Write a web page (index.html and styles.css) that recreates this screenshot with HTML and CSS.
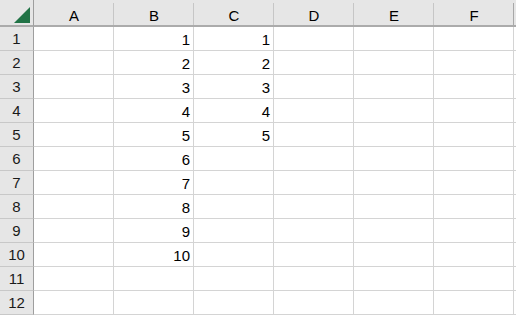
FILE: index.html
```html
<!DOCTYPE html>
<html lang="en">
<head>
    <meta charset="UTF-8">
    <meta name="viewport" content="width=device-width, initial-scale=1.0">
    <title>Sheet1</title>
    <link rel="stylesheet" href="styles.css">
</head>
<body>
    <div id="sheet">
        <div class="corner"><span class="tri"></span></div>
        <div class="colhead">A</div>
        <div class="colhead">B</div>
        <div class="colhead">C</div>
        <div class="colhead">D</div>
        <div class="colhead">E</div>
        <div class="colhead">F</div>
        <div class="colhead last"></div>
    </div>

    <script>
        // данные листа: столбец B 1..10, столбец C 1..5
        const sheet = document.getElementById('sheet');
        const rows = 12;
        const cols = ['A', 'B', 'C', 'D', 'E', 'F'];

        for (let r = 1; r <= rows; r++) {
            const head = document.createElement('div');
            head.className = 'rowhead';
            head.innerText = r;
            sheet.appendChild(head);

            cols.forEach(col => {
                const cell = document.createElement('div');
                cell.className = 'cell';
                if (col === 'B' && r <= 10) cell.innerText = r;
                if (col === 'C' && r <= 5) cell.innerText = r;
                sheet.appendChild(cell);
            });

            const rest = document.createElement('div');
            rest.className = 'cell';
            sheet.appendChild(rest);
        }
    </script>
</body>
</html>
```

FILE: styles.css
```css
body {
    margin: 0;
    background: #ffffff;
    overflow: hidden;
    font-family: 'Liberation Sans', Arial, sans-serif;
    font-size: 15px;
    color: #000;
}
#sheet {
    display: grid;
    grid-template-columns: 34px repeat(6, 80px) 10px;
    grid-template-rows: 27px repeat(12, 24px);
}
.corner {
    background-color: #e6e6e6;
    border-right: 1px solid #9e9e9e;
    border-bottom: 2px solid #ababab;
    box-sizing: border-box;
    position: relative;
}
.tri {
    position: absolute;
    left: 14px;
    top: 7px;
    width: 0;
    height: 0;
    border-left: 16px solid transparent;
    border-bottom: 16px solid #217346;
}
.colhead {
    background-color: #e6e6e6;
    border-bottom: 2px solid #ababab;
    box-sizing: border-box;
    text-align: center;
    padding-top: 5px;
    line-height: 21px;
    position: relative;
}
.colhead::after {
    content: '';
    position: absolute;
    right: 0;
    top: 3px;
    bottom: 0;
    width: 1px;
    background-color: #c6c6c6;
}
.colhead:nth-child(7)::after {
    background-color: #a8a8a8;
}
.colhead.last::after {
    display: none;
}
.rowhead {
    background-color: #e6e6e6;
    border-right: 1px solid #9e9e9e;
    border-bottom: 1px solid #c8c8c8;
    box-sizing: border-box;
    text-align: center;
    padding-top: 1px;
    line-height: 22px;
    color: #1a1a1a;
}
.cell {
    border-right: 1px solid #d4d4d4;
    border-bottom: 1px solid #d4d4d4;
    box-sizing: border-box;
    text-align: right;
    padding: 2px 3px 0 0;
    line-height: 22px;
}
```
